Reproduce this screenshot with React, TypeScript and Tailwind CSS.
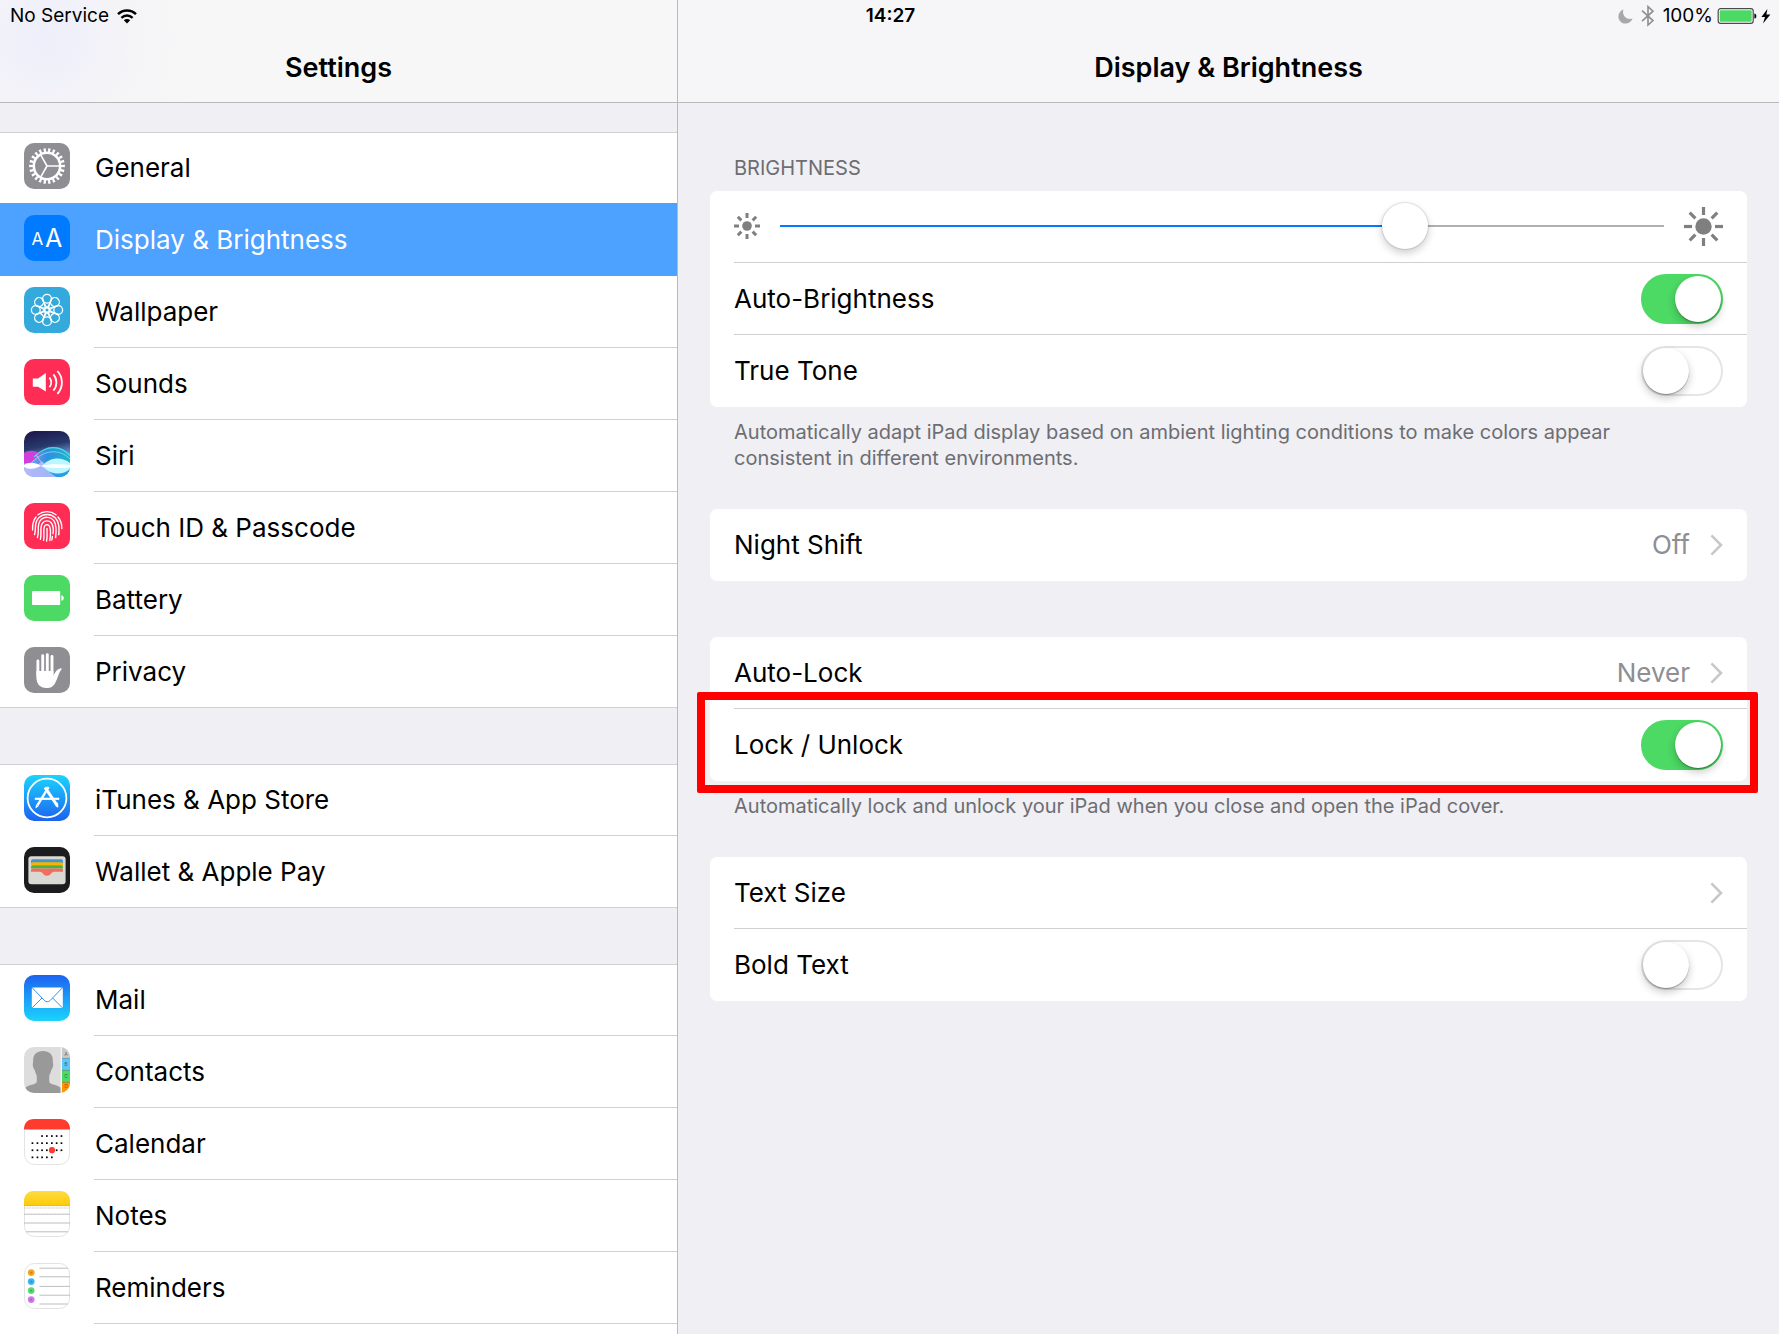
import React, { useState } from 'react';

const GearIcon = () => (
  <svg viewBox="0 0 46 46" className="size-[46px]">
    <rect width="46" height="46" rx="10" fill="#8e8e93" />
    <g fill="none" stroke="#fff">
      <circle cx="23" cy="23" r="16" strokeWidth="3.8" pathLength="44" strokeDasharray="1 1" strokeDashoffset="0.5" />
      <circle cx="23" cy="23" r="13.2" strokeWidth="2.6" />
      <path d="M23 23H36M23 23L16.5 11.7M23 23L16.5 34.3" strokeWidth="1.6" />
    </g>
  </svg>
);

const DisplayIcon = () => (
  <svg viewBox="0 0 46 46" className="size-[46px] font-['Inter']">
    <rect width="46" height="46" rx="10" fill="#007aff" />
    <text x="7.6" y="30.4" fontSize="17" fill="#fff">A</text>
    <text x="21" y="32.4" fontSize="25" fill="#fff">A</text>
  </svg>
);

const WallpaperIcon = () => (
  <svg viewBox="0 0 46 46" className="size-[46px]">
    <rect width="46" height="46" rx="10" fill="#34aadc" />
    <g fill="none" stroke="#fff" strokeWidth="1.3">
      {[0, 45, 90, 135, 180, 225, 270, 315].map((deg) => (
        <g key={deg} transform={`rotate(${deg} 23 23)`}>
          <circle cx="23" cy="11.8" r="4.4" />
          <path d="M23 20.8C20.6 18.4 19.4 15.4 18.8 12.6M23 20.8C25.4 18.4 26.6 15.4 27.2 12.6" />
        </g>
      ))}
      <circle cx="23" cy="23" r="2.2" />
    </g>
  </svg>
);

const SoundsIcon = () => (
  <svg viewBox="0 0 46 46" className="size-[46px]">
    <rect width="46" height="46" rx="10" fill="#ff2d55" />
    <path d="M8.8 19.4H14L21.8 14V32.6L14 27.8H8.8Z" fill="#fff" />
    <path
      d="M25.4 18.6C27.8 21.4 27.8 25.4 25.4 28.2M29.4 15.4C33.4 20 33.4 27 29.4 31.6M33.4 12C39.4 18.6 39.4 28.2 33.4 34.8"
      fill="none"
      stroke="#fff"
      strokeWidth="1.8"
    />
  </svg>
);

const SiriIcon = () => (
  <svg viewBox="0 0 46 46" className="size-[46px]">
    <defs>
      <clipPath id="siri-clip"><rect width="46" height="46" rx="10" /></clipPath>
      <linearGradient id="siri-sky" x1="0" y1="0" x2="0.2" y2="1">
        <stop offset="0" stopColor="#1d1348" />
        <stop offset="0.4" stopColor="#263a6c" />
        <stop offset="0.7" stopColor="#7f9fe8" />
        <stop offset="1" stopColor="#c2cdfb" />
      </linearGradient>
      <linearGradient id="siri-wave" x1="0" y1="0" x2="1" y2="0">
        <stop offset="0" stopColor="#9aa4f2" />
        <stop offset="0.5" stopColor="#2f8fdf" />
        <stop offset="1" stopColor="#19b7c9" />
      </linearGradient>
    </defs>
    <g clipPath="url(#siri-clip)">
      <rect width="46" height="46" fill="url(#siri-sky)" />
      <path d="M0 22C5 19 11 19 16 23L24 32H0Z" fill="#d03fdc" />
      <path d="M0 35C12 32 16 16 29 16C37 16 42 19 46 24V46H0Z" fill="url(#siri-wave)" />
      <path d="M10 26C17 19 22 16.6 29 16.6C37 16.6 42 20 46 25" fill="none" stroke="#4fd9e4" strokeWidth="1.2" />
      <path d="M8 31C16 24 22 20.6 30 20.8C37 21 42 24 46 28" fill="none" stroke="#8fd4f6" strokeWidth="0.8" />
      <path d="M0 36C8 36 14 34 18 30C24 38 30 43 36 46H0Z" fill="#b9bcfa" opacity="0.85" />
      <path d="M12 24C16 29 20 37 28 42" fill="none" stroke="#e6b6f6" strokeWidth="1" />
      <path d="M20 37C28 34 38 36 46 40V46H32Z" fill="#2b9de6" />
      <path d="M18 35C25 26 38 25 46 32V38C38 45 26 44 18 35Z" fill="#bdf6ff" />
      <path d="M0 34C5 30.6 11 31.4 17 34.8C11 38.4 5 38.8 0 36Z" fill="#fff" />
      <path d="M16 34.9C26 32.4 38 33 46 34V36.4C38 37.4 26 37.4 16 34.9Z" fill="#fff" />
    </g>
  </svg>
);

const TouchIdIcon = () => (
  <svg viewBox="0 0 46 46" className="size-[46px]">
    <rect width="46" height="46" rx="10" fill="#ff2d55" />
    <g fill="none" stroke="#fff" strokeWidth="1.4" strokeLinecap="round">
      <path d="M14 11.8C19.5 7.6 26.5 7.6 32 11.8" />
      <path d="M8.6 27C8.3 21.6 9.2 17.4 12 14M34 14C37 17.6 38 21.4 37.8 25.6" />
      <path d="M10.6 31.6C12.4 26 9.6 19.6 14.8 14.8C19.4 10.4 26.6 10.4 31.2 14.8C35.6 19.2 35.2 25.4 34.8 31.8" />
      <path d="M13.4 34.6C15.6 28 12.6 22.4 16.2 17.6C19.6 13.2 26.6 13.2 30 17.8C32.8 22 32.4 28 31.6 34.6" />
      <path d="M16.4 36.4C18 30.4 15.6 25 18.2 20.6C20.4 17 25.6 17 27.8 20.6C29.8 24.4 29.4 28.4 29 30.6" />
      <path d="M19.6 37.4C20.8 31.6 18.8 27.4 20.4 23.6C21.4 21.2 24.6 21.2 25.6 23.6C27 27 26.6 32.4 25.8 37.6" />
      <path d="M22.6 38C23.6 33.2 23 29 23 25.4M28.4 33.4L27.8 37" />
    </g>
  </svg>
);

const BatteryIcon = () => (
  <svg viewBox="0 0 46 46" className="size-[46px]">
    <rect width="46" height="46" rx="10" fill="#4cd964" />
    <rect x="8" y="16" width="28.2" height="14" rx="1" fill="#fff" />
    <path d="M37.4 20.2C40.6 20.8 40.6 25.2 37.4 25.8Z" fill="#fff" />
  </svg>
);

const PrivacyIcon = () => (
  <svg viewBox="0 0 46 46" className="size-[46px]">
    <rect width="46" height="46" rx="10" fill="#8e8e93" />
    <path d="M13.9 14V29M18.7 8.6V26M23.3 7.6V26M28 9.4V27" stroke="#fff" strokeWidth="2.9" strokeLinecap="round" />
    <path
      d="M12.4 24H29.4V28.4C31.4 25.4 32.6 22 37 21.2C38 21.2 38 22 37.4 22.6C34.6 26 34 31 31.4 35.4C29.4 39.6 26.4 41 22.4 41C16 41 12.4 37 12.4 30Z"
      fill="#fff"
    />
  </svg>
);

const AppStoreIcon = () => (
  <svg viewBox="0 0 46 46" className="size-[46px]">
    <defs>
      <linearGradient id="store-bg" x1="0" y1="0" x2="0" y2="1">
        <stop offset="0" stopColor="#1ad4fd" />
        <stop offset="1" stopColor="#1d62f0" />
      </linearGradient>
    </defs>
    <rect width="46" height="46" rx="10" fill="url(#store-bg)" />
    <g fill="none" stroke="#fff">
      <circle cx="23" cy="23" r="19.4" strokeWidth="1.8" />
      <path d="M10.8 23.8H35.2" strokeWidth="2.2" />
      <path d="M24.6 12L13.4 30.4" strokeWidth="2.4" />
      <path d="M21 12.4L32.2 29" strokeWidth="3" />
    </g>
    <path d="M12 29.6L14.6 31.2L11.4 33.6ZM30.6 29.4L33.4 27.6C34.4 29 34.4 30.8 34.2 32.6C32.4 32 31.4 31 30.6 29.4Z" fill="#fff" />
  </svg>
);

const WalletIcon = () => (
  <svg viewBox="0 0 46 46" className="size-[46px]">
    <rect width="46" height="46" rx="10" fill="#1c1c1e" />
    <rect x="4.4" y="9.2" width="37.2" height="28" rx="3" fill="#d9d8d2" />
    <path d="M7 16V14Q7 12.2 9 12.2H37Q39 12.2 39 14V16Z" fill="#3b99d0" />
    <path d="M7 18.6V17Q7 15.2 9 15.2H37Q39 15.2 39 17V18.6Z" fill="#ffb003" />
    <path d="M7 21.6V20Q7 18.2 9 18.2H37Q39 18.2 39 20V21.6Z" fill="#40b740" />
    <path d="M7 24.8V23Q7 21.4 9 21.4H37Q39 21.4 39 23V24.8H30C27 24.8 27 28.8 23 28.8C19 28.8 19 24.8 16 24.8Z" fill="#f26d5f" />
  </svg>
);

const MailIcon = () => (
  <svg viewBox="0 0 46 46" className="size-[46px]">
    <defs>
      <linearGradient id="mail-bg" x1="0" y1="0" x2="0" y2="1">
        <stop offset="0" stopColor="#1d62f0" />
        <stop offset="1" stopColor="#1ad4fd" />
      </linearGradient>
    </defs>
    <rect width="46" height="46" rx="10" fill="url(#mail-bg)" />
    <rect x="7.8" y="12.4" width="31" height="20.6" rx="1.4" fill="#fff" />
    <path
      d="M8.4 13L20.6 25.6C22.2 27.2 24.4 27.2 26 25.6L38.2 13M8.4 32.6L18 23M38.2 32.6L28.6 23"
      fill="none"
      stroke="#2b93f6"
      strokeWidth="1"
    />
  </svg>
);

const ContactsIcon = () => (
  <svg viewBox="0 0 46 46" className="size-[46px]">
    <defs>
      <clipPath id="contacts-clip"><rect width="46" height="46" rx="10" /></clipPath>
    </defs>
    <g clipPath="url(#contacts-clip)">
      <rect width="46" height="46" fill="#dddddd" />
      <path
        d="M19 4C25 4 29.4 7.6 28.8 14C28.8 16 29.6 17 29 19.4C28.6 21.4 27.6 22 27 24C26.6 26 25.6 27.4 25.2 29V35C26.6 38.4 36 37.6 37 42V46H1V42C2 37.6 11.4 38.4 12.8 35V29C12.4 27.4 11.4 26 11 24C10.4 22 9.4 21.4 9 19.4C8.4 17 9.2 16 9.2 14C8.6 7.6 13 4 19 4Z"
        fill="#999"
      />
      <rect x="36.6" width="1.4" height="46" fill="#f5f5f5" />
      <rect x="38" width="8" height="11.4" fill="#c9c9cb" />
      <rect x="38" y="11.4" width="8" height="12" fill="#5ac8fa" />
      <rect x="38" y="23.4" width="8" height="12" fill="#4cd964" />
      <rect x="38" y="35.4" width="8" height="11" fill="#ff9500" />
      <path d="M38 11.4H46M38 23.4H46M38 35.4H46" stroke="#000" strokeOpacity="0.3" strokeWidth="0.8" />
      <g fontSize="5" fill="#000" fillOpacity="0.5" textAnchor="middle" className="font-['Inter']">
        <text x="42" y="8.6">A</text>
        <text x="42" y="19.4">B</text>
        <text x="42" y="31.2">C</text>
        <text x="42" y="41">D</text>
      </g>
    </g>
  </svg>
);

const calendarDots = [
  [18, 22.8, 27.8, 32.6, 37.4],
  [8.4, 13.4, 18, 22.8, 27.8, 32.6, 37.4],
  [8.4, 13.4, 18, 22.8, 27.8, 32.6, 37.4],
  [8.4, 13.4, 18, 22.8, 27.8],
];

const CalendarIcon = () => (
  <svg viewBox="0 0 46 46" className="size-[46px]">
    <rect x="0.5" y="0.5" width="45" height="45" rx="10" fill="#fff" stroke="#e3e3e6" />
    <path d="M0 10.6V10C0 4 4 0 10 0H36C42 0 46 4 46 10V10.6Z" fill="#ff3b30" />
    {calendarDots.map((row, r) =>
      row.map((x) => <rect key={`${r}-${x}`} x={x - 0.8} y={16.2 + r * 7.1} width="1.7" height="1.7" fill="#000" />)
    )}
    <circle cx="28" cy="31.2" r="3.1" fill="#ff3b30" />
  </svg>
);

const NotesIcon = () => (
  <svg viewBox="0 0 46 46" className="size-[46px]">
    <defs>
      <linearGradient id="notes-top" x1="0" y1="0" x2="0" y2="1">
        <stop offset="0" stopColor="#ffdb45" />
        <stop offset="1" stopColor="#fccb06" />
      </linearGradient>
    </defs>
    <rect x="0.5" y="0.5" width="45" height="45" rx="10" fill="#fff" stroke="#e3e3e6" />
    <path d="M0 14.4V10C0 4 4 0 10 0H36C42 0 46 4 46 10V14.4Z" fill="url(#notes-top)" />
    <path d="M0 14.6H46" stroke="#c9a93c" strokeWidth="0.8" />
    <path d="M0 17H46" stroke="#c8c8c8" strokeWidth="1" strokeDasharray="1 0.6" />
    <path d="M0 23.2H46M0 32H46M2 40.8H44" stroke="#bdbdbf" strokeWidth="1" />
  </svg>
);

const RemindersIcon = () => (
  <svg viewBox="0 0 46 46" className="size-[46px]">
    <rect x="0.5" y="0.5" width="45" height="45" rx="10" fill="#fff" stroke="#e3e3e6" />
    <path d="M15.4 5.2H44M15.4 13.8H46M15.4 23.4H46M15.4 32.2H46M15.4 41H44" stroke="#bdbdbf" strokeWidth="1" />
    {['#f7a51f', '#3db5f5', '#5fd873', '#cf7be8'].map((c, i) => (
      <g key={c}>
        <circle cx="7.2" cy={9.6 + i * 9} r="3.4" fill={c} />
        <circle cx="7.2" cy={9.6 + i * 9} r="1.2" fill="#000" fillOpacity="0.2" />
      </g>
    ))}
  </svg>
);

const menu = [
  [
    { name: 'General', icon: <GearIcon /> },
    { name: 'Display & Brightness', icon: <DisplayIcon />, active: true },
    { name: 'Wallpaper', icon: <WallpaperIcon /> },
    { name: 'Sounds', icon: <SoundsIcon /> },
    { name: 'Siri', icon: <SiriIcon /> },
    { name: 'Touch ID & Passcode', icon: <TouchIdIcon /> },
    { name: 'Battery', icon: <BatteryIcon /> },
    { name: 'Privacy', icon: <PrivacyIcon /> },
  ],
  [
    { name: 'iTunes & App Store', icon: <AppStoreIcon /> },
    { name: 'Wallet & Apple Pay', icon: <WalletIcon /> },
  ],
  [
    { name: 'Mail', icon: <MailIcon /> },
    { name: 'Contacts', icon: <ContactsIcon /> },
    { name: 'Calendar', icon: <CalendarIcon /> },
    { name: 'Notes', icon: <NotesIcon /> },
    { name: 'Reminders', icon: <RemindersIcon /> },
  ],
];

// first row slides up over the group's top border so every row keeps the same rhythm
const MenuRow = ({ item }: { item: { name: string; icon: React.ReactNode; active?: boolean } }) => (
  <li
    className={
      item.active
        ? 'group/row relative -mt-px flex h-[73px] bg-[#4da1ff] pt-px text-white'
        : 'group/row flex h-18 first:h-[71px]'
    }
  >
    <a href="#" className="flex h-18 flex-1 gap-6 pl-6 group-first/row:-mt-px">
      <span className="flex items-center pb-1">{item.icon}</span>
      <span
        className={
          item.active
            ? 'flex flex-1 items-center border-b border-transparent pl-px'
            : 'flex flex-1 items-center border-b border-[#d0cfd4] pl-px group-last/row:border-transparent'
        }
      >
        {item.name}
      </span>
    </a>
  </li>
);

const Sun = ({ size, core, inner, width }: { size: number; core: number; inner: number; width: number }) => (
  <svg width={size} height={size} viewBox={`0 0 ${size} ${size}`} className="shrink-0" stroke="#7f7f7f" strokeWidth={width}>
    <circle cx={size / 2} cy={size / 2} r={core} fill="#7f7f7f" stroke="none" />
    {[0, 45, 90, 135, 180, 225, 270, 315].map((deg) => (
      <path key={deg} d={`M${size / 2} 0V${inner}`} transform={`rotate(${deg} ${size / 2} ${size / 2})`} />
    ))}
  </svg>
);

const Chevron = () => (
  <svg viewBox="0 0 13 22" className="h-[22px] w-[13px]" fill="none" stroke="#c7c7cc" strokeWidth="2.6">
    <path d="M1.4 1.4L11 11L1.4 20.6" />
  </svg>
);

const Card = ({ children }: { children: React.ReactNode }) => <div className="rounded-[7px] bg-white">{children}</div>;

const rowBox = 'group/row relative h-18 pl-6';
const rowLine = 'flex h-full items-center border-b border-[#d0cfd4] pr-6 group-last/row:border-transparent';

const SwitchRow = ({ label, on, marked }: { label: string; on?: boolean; marked?: boolean }) => {
  const [checked, setChecked] = useState(!!on);
  return (
    <div className={rowBox}>
      <label className={rowLine}>
        <span className="flex-1">{label}</span>
        <input
          type="checkbox"
          role="switch"
          checked={checked}
          onChange={(e) => setChecked(e.target.checked)}
          className="flex h-[50px] w-[82px] shrink-0 appearance-none rounded-full border-2 border-[#e5e5e5] bg-white before:size-[46px] before:rounded-full before:bg-white before:shadow-[0_1px_1px_rgba(0,0,0,0.3),0_4px_8px_rgba(0,0,0,0.22)] before:content-[''] checked:border-[#4cd964] checked:bg-[#4cd964] checked:before:ml-8"
        />
      </label>
      {marked && (
        <div className="pointer-events-none absolute -top-[17px] -right-[11px] -bottom-3 -left-[13px] rounded-[2px] border-8 border-[#ff0000]" />
      )}
    </div>
  );
};

const LinkRow = ({ label, value }: { label: string; value?: string }) => (
  <div className={rowBox}>
    <a href="#" className={rowLine}>
      <span className="flex-1">{label}</span>
      <span className="pr-5 text-[#8e8e93]">{value}</span>
      <Chevron />
    </a>
  </div>
);

const StatusBar = () => (
  <div className="absolute inset-x-0 top-0 grid h-8 grid-cols-3 items-center pr-2 pl-[10px] text-[19px]">
    <div className="flex items-center gap-2">
      <span>No Service</span>
      <svg viewBox="0 0 20 15" className="h-[15px] w-5" fill="none" stroke="#000" strokeWidth="2.4">
        <path d="M1 5.2C6 0.2 14 0.2 19 5.2M4.4 8.8C7.6 5.8 12.4 5.8 15.6 8.8" />
        <path d="M6.8 11.2C8.6 9.6 11.4 9.6 13.2 11.2L10 14.6Z" fill="#000" stroke="none" />
      </svg>
    </div>
    <div className="text-center font-semibold">14:27</div>
    <div className="flex items-center justify-end gap-2">
      <svg viewBox="0 0 15 15" className="size-[15px]">
        <path d="M5.4 0.4C3.6 5.6 8 11.2 14.6 9.6C13.2 12.8 10.6 14.6 7.6 14.6C3.6 14.6 0.4 11.4 0.4 7.4C0.4 4.2 2.4 1.4 5.4 0.4Z" fill="#a8a8aa" />
      </svg>
      <svg viewBox="0 0 14 22" className="h-[22px] w-[14px]" fill="none" stroke="#8f8f91" strokeWidth="1.6">
        <path d="M1 5.6L12 15.6L7 20V1.6L12 6.2L1 16.2" />
      </svg>
      <span>100%</span>
      <svg viewBox="0 0 54 16" className="-ml-1 h-4 w-[54px]">
        <rect x="1.2" y="0.7" width="35" height="14.6" rx="2.4" fill="#fff" stroke="#4a4a4a" strokeWidth="1.2" />
        <rect x="2.7" y="2.2" width="32" height="11.6" rx="1" fill="#4cd964" />
        <path d="M37.4 5.4C40 5.8 40 10.2 37.4 10.6Z" fill="#000" />
        <path d="M50.4 1L44.4 9H48L46 15.4L53.4 6.6H49.4Z" fill="#000" />
      </svg>
    </div>
  </div>
);

const footnote = 'mt-3 pr-12 pl-6 text-[20px] leading-[26px] text-[#6d6d72]';
const heading = 'flex h-[103px] shrink-0 items-end justify-center border-b border-[#b9b9bb] pb-[18px] text-[27px] leading-8 font-semibold';

export default function App() {
  const [brightness, setBrightness] = useState(718);

  return (
    <div className="relative grid h-screen grid-cols-[678fr_1101fr] overflow-hidden bg-[#efeff4] font-['Inter','Liberation_Sans',sans-serif] text-[26px] text-black">
      <aside className="flex min-h-0 flex-col overflow-hidden border-r border-[#b9b9bb]">
        <header className={`${heading} bg-[radial-gradient(circle_at_45px_40px,#eeeefb_0,#f5f5f7_90px,#f7f7f7_160px)]`}>
          <h1>Settings</h1>
        </header>
        <nav className="mt-[29px] flex flex-1 flex-col gap-14">
          {menu.map((items, i) => (
            <ul
              key={i}
              className={
                i === menu.length - 1
                  ? 'flex-1 border-t border-[#d0cfd4] bg-white'
                  : 'border-t border-[#d0cfd4] bg-white [&>li:last-child]:border-b [&>li:last-child]:border-[#d0cfd4]'
              }
            >
              {items.map((item) => (
                <MenuRow key={item.name} item={item} />
              ))}
              {i === menu.length - 1 && <li className="h-18" />}
            </ul>
          ))}
        </nav>
      </aside>

      <main className="min-h-0 overflow-hidden">
        <header className={`${heading} bg-[#f6f6f8]`}>
          <h2>Display &amp; Brightness</h2>
        </header>
        <div className="px-8 pt-[52px]">
          <h3 className="pb-[10px] pl-6 text-[20px] leading-[26px] text-[#6d6d72]">BRIGHTNESS</h3>
          <Card>
            <div className={rowBox}>
              <div className={`${rowLine} gap-5 pb-px`}>
                <Sun size={26} core={4.8} inner={5} width={3} />
                <input
                  type="range"
                  aria-label="Brightness"
                  min={0}
                  max={1000}
                  value={brightness}
                  onChange={(e) => setBrightness(Number(e.target.value))}
                  style={{
                    backgroundImage: `linear-gradient(to right, #007aff ${brightness / 10}%, #b0b0b0 ${brightness / 10}%)`,
                  }}
                  className="h-[46px] min-w-0 flex-1 appearance-none bg-size-[100%_2px] bg-center bg-no-repeat [&::-webkit-slider-thumb]:size-[46px] [&::-webkit-slider-thumb]:appearance-none [&::-webkit-slider-thumb]:rounded-full [&::-webkit-slider-thumb]:bg-white [&::-webkit-slider-thumb]:shadow-[0_0_1px_1px_rgba(0,0,0,0.1),0_4px_8px_rgba(0,0,0,0.2)]"
                />
                <Sun size={39} core={8.2} inner={8} width={3.2} />
              </div>
            </div>
            <SwitchRow label="Auto-Brightness" on />
            <SwitchRow label="True Tone" />
          </Card>
          <p className={footnote}>
            Automatically adapt iPad display based on ambient lighting conditions to make colors appear consistent in
            different environments.
          </p>

          <div className="mt-[38px]">
            <Card>
              <LinkRow label="Night Shift" value="Off" />
            </Card>
          </div>

          <div className="mt-14">
            <Card>
              <LinkRow label="Auto-Lock" value="Never" />
              <SwitchRow label="Lock / Unlock" on marked />
            </Card>
          </div>
          <p className={footnote}>Automatically lock and unlock your iPad when you close and open the iPad cover.</p>

          <div className="mt-[38px]">
            <Card>
              <LinkRow label="Text Size" />
              <SwitchRow label="Bold Text" />
            </Card>
          </div>
        </div>
      </main>

      <StatusBar />
    </div>
  );
}
